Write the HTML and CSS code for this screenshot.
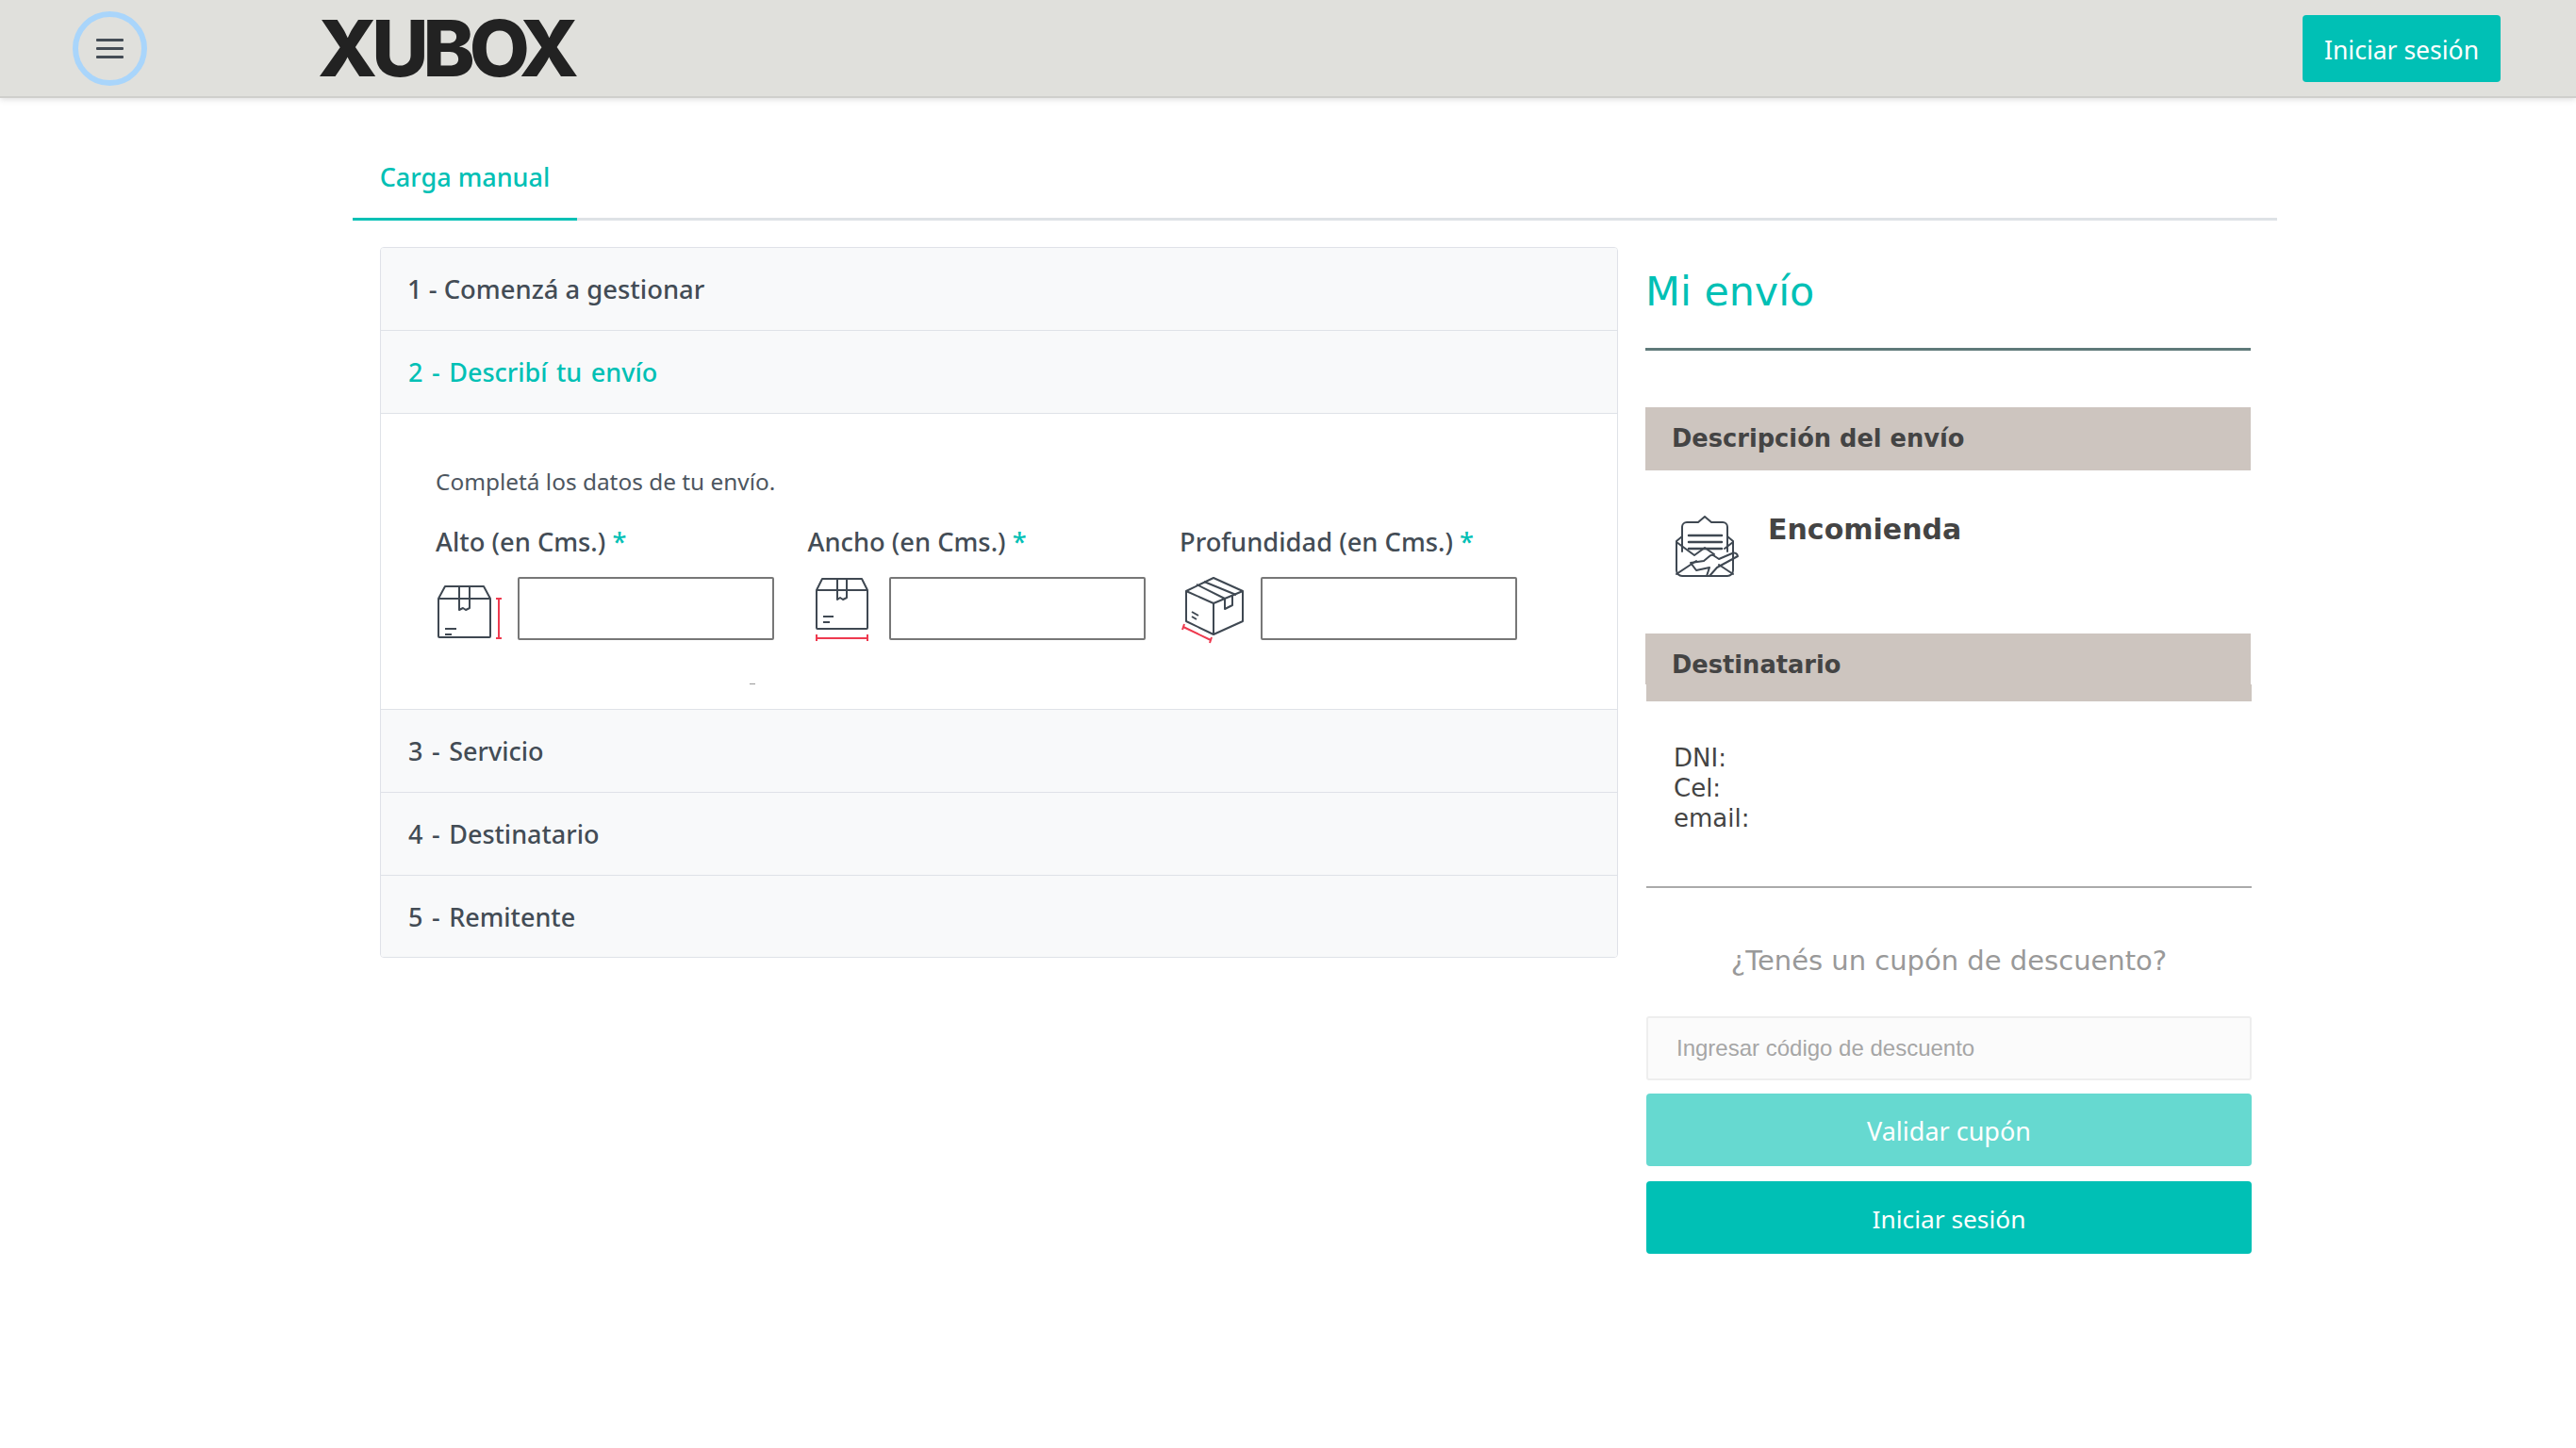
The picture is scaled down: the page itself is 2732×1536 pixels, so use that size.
FILE: index.html
```html
<!DOCTYPE html>
<html lang="es">
<head>
  <meta charset="UTF-8" />
  <title>Xubox - Carga manual</title>
  <link rel="stylesheet" href="styles.css">
</head>
<body>
  <header class="topbar">
    <button class="menu-btn" aria-label="Menu">
      <span></span><span></span><span></span>
    </button>
    <div class="logo">XUBOX</div>
    <button class="btn login-top">Iniciar sesión</button>
  </header>

  <main class="page">
    <div class="tabs">
      <a class="tab active">Carga manual</a>
    </div>

    <div class="columns">
      <section class="steps">
        <div class="step-head first">1 - Comenzá a gestionar</div>
        <div class="step-head open">2 - Describí tu envío</div>
        <div class="step-body">
          <p class="intro">Completá los datos de tu envío.</p>
          <div class="fields">
            <div class="field">
              <label>Alto (en Cms.) <span class="req">*</span></label>
              <div class="field-row">
                <svg class="icon-alto" width="66" height="60" viewBox="0 0 66 60" fill="none" stroke="#3f4852" stroke-width="2" stroke-linejoin="round">
                  <path d="M1 15 L8 2 H49 L56 15 V55 a1 1 0 0 1 -1 1 H2 a1 1 0 0 1 -1 -1 Z"/>
                  <path d="M1 15 H56"/>
                  <path d="M23 2 V27 L27 25 L30 27 L34 25 V2"/>
                  <path d="M8 47 H20 M8 53 H15"/>
                  <path d="M65 15 V57 M62 15 H68 M62 57 H68" stroke="#ee3a4f"/>
                </svg>
                <input type="text">
              </div>
            </div>
            <div class="field">
              <label>Ancho (en Cms.) <span class="req">*</span></label>
              <div class="field-row">
                <svg class="icon-ancho" width="56" height="68" viewBox="0 0 56 68" fill="none" stroke="#3f4852" stroke-width="2" stroke-linejoin="round">
                  <path d="M1 13 L7 1 H49 L55 13 V53 a1 1 0 0 1 -1 1 H2 a1 1 0 0 1 -1 -1 Z"/>
                  <path d="M1 13 H55"/>
                  <path d="M23 1 V23 L26 21 L29 23 L33 21 V1"/>
                  <path d="M8 41 H19 M8 47 H15"/>
                  <path d="M1 64 H55 M1 60 V67 M55 60 V67" stroke="#ee3a4f"/>
                </svg>
                <input type="text">
              </div>
            </div>
            <div class="field">
              <label>Profundidad (en Cms.) <span class="req">*</span></label>
              <div class="field-row">
                <svg class="icon-prof" width="66" height="70" viewBox="0 0 66 70" fill="none" stroke="#3f4852" stroke-width="2" stroke-linejoin="round">
                  <path d="M34 1 L65 15 V47 L34 61 L5 47 V15 Z"/>
                  <path d="M5 15 L34 28 L65 15 M34 28 V61"/>
                  <path d="M24 5 L58 19 M16 8 L46 23"/>
                  <path d="M46 23 V34 L54 30 V20"/>
                  <path d="M11 37 L18 41 M11 42 L16 45"/>
                  <path d="M2 53 L31 67 M3 50 L1 56 M32 64 L30 70" stroke="#ee3a4f"/>
                </svg>
                <input type="text">
              </div>
            </div>
          </div>
          <div class="speck"></div>
        </div>
        <div class="step-head">3 - Servicio</div>
        <div class="step-head">4 - Destinatario</div>
        <div class="step-head last">5 - Remitente</div>
      </section>

      <aside class="summary">
        <h2 class="summary-title">Mi envío</h2>
        <div class="band band-first">Descripción del envío</div>
        <div class="parcel">
          <svg width="68" height="66" viewBox="0 0 68 66" fill="none" stroke="#3f4852" stroke-width="2" stroke-linejoin="round" stroke-linecap="round">
            <path d="M7 22 L1 27 V58 a6 6 0 0 0 6 6 H55 a6 6 0 0 0 6 -6 V27 L55 22"/>
            <path d="M7 38 V12 a5 5 0 0 1 5 -5 H24 L31 1 L38 7 H50 a5 5 0 0 1 5 5 V38"/>
            <path d="M14 21 H49 M14 28 H49 M14 35 H49" stroke-width="2.5"/>
            <path d="M1 28 L20 42 M61 28 L52 35 M20 42 L31 34 L41 41"/>
            <path d="M1 62 L22 48 M61 62 L46 52"/>
            <path d="M16 50 L30 48 L36 43 a4 4 0 0 1 4 -1 L46 46 L60 40 a4 4 0 0 1 6 3 L44 55 L36 64 H33 L36 55 L22 58 Z"/>
          </svg>
          <div class="parcel-name">Encomienda</div>
        </div>
        <div class="band band-second">Destinatario</div>
        <div class="band-tail"></div>
        <div class="contact">
          <div>DNI:</div>
          <div>Cel:</div>
          <div>email:</div>
        </div>
        <div class="coupon">
          <div class="coupon-title">¿Tenés un cupón de descuento?</div>
          <input class="coupon-input" type="text" placeholder="Ingresar código de descuento">
          <button class="btn wide disabled">Validar cupón</button>
          <button class="btn wide login-side">Iniciar sesión</button>
        </div>
      </aside>
    </div>
  </main>
</body>
</html>
```

FILE: styles.css
```css
body {
  margin: 0;
  background: #fff;
  font-family: "Noto Sans", sans-serif;
  color: #434c55;
}

.topbar {
  height: 104px;
  background: #e0e0dc;
  border-bottom: 2px solid #cfcfcc;
  box-shadow: 0 2px 6px rgba(0, 0, 0, 0.12);
  display: flex;
  align-items: center;
  box-sizing: border-box;
  padding-left: 77px;
  padding-right: 80px;
}

.menu-btn {
  width: 79px;
  height: 79px;
  padding: 0;
  border: 6px solid #a9d5fb;
  border-radius: 50%;
  background: none;
  display: flex;
  flex-direction: column;
  align-items: center;
  justify-content: center;
  gap: 6px;
}

.menu-btn span {
  display: block;
  width: 29px;
  height: 3px;
  border-radius: 1px;
  background: #444c55;
}

.logo {
  margin-left: 181px;
  font-family: "Inter", sans-serif;
  font-weight: 800;
  font-size: 83px;
  line-height: 1;
  letter-spacing: -6px;
  color: #222;
}

.btn {
  border: none;
  border-radius: 4px;
  background: #00c0b5;
  color: #fff;
  font-family: "Noto Sans", sans-serif;
  font-size: 27px;
}

.login-top {
  margin-left: auto;
  width: 210px;
  height: 71px;
  padding: 3px 0 0;
  font-size: 26.5px;
}

.page {
  padding-left: 374px;
}

.tabs {
  width: 2041px;
  height: 130px;
  box-sizing: border-box;
  border-bottom: 3px solid #dee2e6;
  display: flex;
  align-items: flex-end;
}

.tab {
  width: 238px;
  height: 88px;
  box-sizing: border-box;
  margin-bottom: -3px;
  padding-top: 23px;
  text-align: center;
  font-size: 27px;
  line-height: 38px;
  font-weight: 500;
  color: #00c0b5;
  border-bottom: 3px solid #00c0b5;
}

.columns {
  display: flex;
  align-items: flex-start;
  margin-top: 28px;
  margin-left: 29px;
  gap: 29px;
}

.steps {
  width: 1313px;
  box-sizing: border-box;
  border: 1px solid #dfe2e8;
  border-radius: 4px;
  overflow: hidden;
}

.step-head {
  height: 88px;
  box-sizing: border-box;
  padding-left: 29px;
  line-height: 88px;
  background: #f8f9fa;
  border-bottom: 1px solid #dfe2e8;
  font-size: 27px;
  font-weight: 500;
  word-spacing: 2.5px;
}

.step-head.first {
  padding-left: 28px;
  font-size: 27.4px;
  word-spacing: 0;
}

.step-head.open {
  color: #00c0b5;
}

.step-head.last {
  height: 86px;
  border-bottom: none;
}

.step-body {
  height: 314px;
  box-sizing: border-box;
  padding: 54px 0 0 58px;
  border-bottom: 1px solid #dfe2e8;
}

.intro {
  margin: 0;
  font-size: 24.4px;
  line-height: 36px;
  color: #4d5660;
}

.fields {
  display: flex;
  margin-top: 27px;
}

.field {
  width: 394.5px;
}

.field label {
  display: block;
  font-size: 27.3px;
  line-height: 38px;
  font-weight: 500;
}

.req {
  color: #00c0b5;
}

.field-row {
  display: flex;
  margin-top: 18px;
  height: 67px;
}

.field-row svg {
  flex: none;
  overflow: visible;
}

.field-row input {
  width: 272px;
  height: 67px;
  box-sizing: border-box;
  border: 2px solid #777;
  border-radius: 2px;
  background: #fff;
}

.icon-alto {
  margin: 8px 19px 0 2px;
}

.icon-ancho {
  margin: 1px 22px 0 8px;
}

.icon-prof {
  margin: 0 18px 0 2px;
}

.speck {
  width: 6px;
  height: 1px;
  margin: 46px 0 0 333px;
  background: #999;
}

.summary {
  width: 642px;
}

.summary-title {
  margin: 0;
  padding-top: 22px;
  height: 110px;
  box-sizing: border-box;
  border-bottom: 3px solid #5f7a7a;
  font-family: "DejaVu Sans", sans-serif;
  font-size: 42.8px;
  line-height: 50px;
  font-weight: 400;
  color: #00c0b5;
}

.band {
  background: #cdc5bf;
  padding-left: 28px;
  box-sizing: border-box;
  font-family: "DejaVu Sans", sans-serif;
  font-weight: 700;
  font-size: 25.7px;
  color: #444;
}

.band-first {
  margin-top: 60px;
  height: 67px;
  line-height: 67px;
}

.band-second {
  height: 54px;
  line-height: 67px;
}

.band-tail {
  height: 18px;
  margin-left: 1px;
  margin-right: -1px;
  background: #cdc5bf;
}

.parcel {
  height: 173px;
  box-sizing: border-box;
  padding: 47px 0 0 32px;
  display: flex;
}

.parcel svg {
  flex: none;
  margin-top: 1px;
}

.parcel-name {
  margin: -4px 0 0 30px;
  font-family: "DejaVu Sans", sans-serif;
  font-weight: 700;
  font-size: 30px;
  line-height: 40px;
  color: #444;
}

.contact {
  margin-left: 1px;
  margin-right: -1px;
  padding: 44px 0 56px 29px;
  border-bottom: 2px solid #aaa;
  font-family: "DejaVu Sans", sans-serif;
  font-size: 26px;
  line-height: 32px;
  color: #444;
}

.coupon {
  margin-left: 1px;
  margin-right: -1px;
  display: flex;
  flex-direction: column;
}

.coupon-title {
  margin-top: 57px;
  text-align: center;
  font-family: "DejaVu Sans", sans-serif;
  font-size: 29px;
  line-height: 40px;
  color: #999;
}

.coupon-input {
  margin-top: 39px;
  height: 68px;
  box-sizing: border-box;
  padding: 0 30px;
  border: 2px solid #eee;
  border-radius: 3px;
  background: #fbfbfb;
  font-family: "Liberation Sans", sans-serif;
  font-size: 24px;
}

.coupon-input::placeholder {
  color: #a6a6a6;
}

.wide {
  height: 77px;
  margin-top: 16px;
  padding: 2px 0 0;
}

.wide.disabled {
  margin-top: 14px;
  background: #66d9d0;
}

.login-side {
  font-size: 26.3px;
}
```
